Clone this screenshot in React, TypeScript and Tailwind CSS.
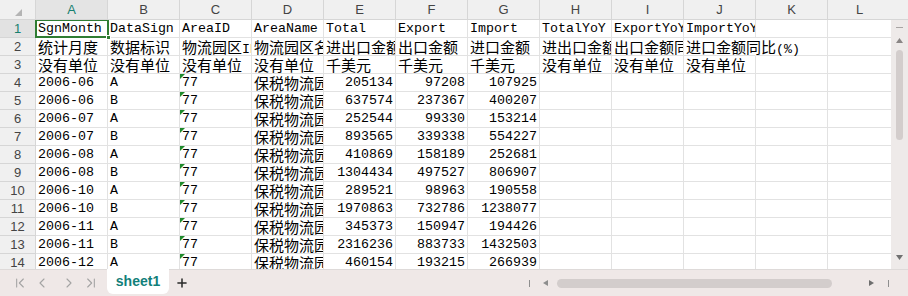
import { ChevronFirst, ChevronLast, ChevronLeft, ChevronRight, Plus } from "lucide-react"

const COLS = ["A", "B", "C", "D", "E", "F", "G", "H", "I", "J", "K"]

const HEAD = [
  ["SgnMonth", "DataSign", "AreaID", "AreaName", "Total", "Export", "Import", "TotalYoY", "ExportYoY", "ImportYoY"],
  ["统计月度", "数据标识", "物流园区ID", "物流园区名称", "进出口金额", "出口金额", "进口金额", "进出口金额同比", "出口金额同比", "进口金额同比(%)"],
  ["没有单位", "没有单位", "没有单位", "没有单位", "千美元", "千美元", "千美元", "没有单位", "没有单位", "没有单位"],
]

const data = [
  ["2006-06", "A", "205134", "97208", "107925"],
  ["2006-06", "B", "637574", "237367", "400207"],
  ["2006-07", "A", "252544", "99330", "153214"],
  ["2006-07", "B", "893565", "339338", "554227"],
  ["2006-08", "A", "410869", "158189", "252681"],
  ["2006-08", "B", "1304434", "497527", "806907"],
  ["2006-10", "A", "289521", "98963", "190558"],
  ["2006-10", "B", "1970863", "732786", "1238077"],
  ["2006-11", "A", "345373", "150947", "194426"],
  ["2006-11", "B", "2316236", "883733", "1432503"],
  ["2006-12", "A", "460154", "193215", "266939"],
]

type Cell = { text?: string; right?: boolean; flag?: boolean; spill?: boolean }

const rows: Cell[][] = [
  ...HEAD.map((r, ri) => [
    ...r.map((t, ci) => ({ text: t, spill: ri === 1 && ci === 9 })),
    {},
  ]),
  ...data.map((d) => [
    { text: d[0] },
    { text: d[1] },
    { text: "77", flag: true },
    { text: "保税物流园区" },
    { text: d[2], right: true },
    { text: d[3], right: true },
    { text: d[4], right: true },
    {},
    {},
    {},
    {},
  ]),
]

function Txt({ s }: { s: string }) {
  const parts = s.split(/([\u4e00-\u9fff]+)/)
  return (
    <>
      {parts.map((p, i) =>
        /[\u4e00-\u9fff]/.test(p) ? (
          <span key={i} className="text-[15px] font-['Noto_Sans_CJK_SC',sans-serif]">
            {p}
          </span>
        ) : (
          <span key={i}>{p}</span>
        )
      )}
    </>
  )
}

export default function App() {
  return (
    <div className="w-[908px] h-[296px] overflow-hidden flex flex-col bg-white select-none">
      {/* column headers */}
      <div className="flex h-[20px] shrink-0 bg-[#f0f0f0] font-['Liberation_Sans',sans-serif] text-[13px] text-[#444]">
        <div className="relative w-[36px] border-r border-b border-[#d6d6d6]">
          <svg className="absolute left-[15px] top-[9px]" width="7" height="7" viewBox="0 0 7 7">
            <path d="M7 0 L7 7 L0 7 Z" fill="#b4b4b4" />
          </svg>
        </div>
        {COLS.map((c) => (
          <div
            key={c}
            className={`w-[72px] border-r border-b border-[#d6d6d6] text-center leading-[20px] ${
              c === "A" ? "bg-[#e4e4e4] text-[#17806f]" : ""
            }`}
          >
            {c}
          </div>
        ))}
        <div className="flex-1 border-b border-[#d6d6d6] text-center leading-[20px] pr-[17px]">L</div>
      </div>

      {/* grid body */}
      <div className="flex flex-1 min-h-0">
        <div className="relative w-[891px] overflow-hidden">
          {rows.map((r, ri) => (
            <div key={ri} className="flex h-[18px]">
              <div
                className={`w-[36px] shrink-0 border-r border-b border-[#d6d6d6] text-center leading-[17px] text-[13px] text-[#444] font-['Liberation_Sans',sans-serif] ${
                  ri === 0 ? "bg-[#e2e2e2] text-[#17806f]" : "bg-[#f0f0f0]"
                }`}
              >
                {ri + 1}
              </div>
              {r.map((cell, ci) => (
                <div
                  key={ci}
                  className={`relative w-[72px] shrink-0 border-b border-r border-[#e2e2e2] whitespace-nowrap px-[2px] leading-[17px] text-[13.3px] text-black font-['Liberation_Mono','Noto_Sans_CJK_SC',monospace] ${
                    cell.right ? "text-right" : ""
                  } ${cell.spill ? "overflow-visible z-10 border-r-white" : "overflow-hidden"}`}
                >
                  {cell.flag && (
                    <svg className="absolute left-0 top-0" width="5" height="5" viewBox="0 0 5 5">
                      <path d="M0 0 L5 0 L0 5 Z" fill="#1f8a2c" />
                    </svg>
                  )}
                  {cell.text && <Txt s={cell.text} />}
                </div>
              ))}
              <div className="flex-1 border-b border-[#e2e2e2]" />
            </div>
          ))}

          {/* selection A1 */}
          <div className="absolute left-[35px] top-[-1px] w-[74px] h-[19px] border-2 border-[#2f7d32] pointer-events-none" />
          <div className="absolute left-[106px] top-[15px] w-[5px] h-[5px] bg-[#2f7d32] border border-white" />
        </div>

        {/* vertical scrollbar */}
        <div className="w-[17px] bg-[#eeeae9] flex flex-col items-center">
          <div className="mt-[7px] w-[7px] h-px bg-[#a8a4a3]" />
          <svg className="mt-[10px]" width="7" height="5" viewBox="0 0 7 5">
            <path d="M3.5 0 L7 5 L0 5 Z" fill="#8a8685" />
          </svg>
          <div className="mt-[7px] w-[7px] h-[90px] rounded-full bg-[#d3cdcc]" />
          <div className="flex-1" />
          <svg className="mb-[9px]" width="7" height="5" viewBox="0 0 7 5">
            <path d="M0 0 L7 0 L3.5 5 Z" fill="#707070" />
          </svg>
        </div>
      </div>

      {/* sheet tabs */}
      <div className="h-[27px] shrink-0 bg-[#efe8e7] border-t border-[#dedad9] flex items-start">
        <div className="flex items-center h-[26px] pl-[12px] gap-[6px] text-[#a3a3a3]">
          <ChevronFirst size={16} strokeWidth={1.6} />
          <ChevronLeft size={16} strokeWidth={1.6} />
          <ChevronRight size={16} strokeWidth={1.6} className="ml-[5px]" />
          <ChevronLast size={16} strokeWidth={1.6} />
        </div>
        <div className="ml-[8px] w-[62px] h-[25px] -mt-px bg-white rounded-b-[6px] flex items-center justify-center text-[14px] font-bold text-[#127f7a] font-['Liberation_Sans',sans-serif]">
          sheet1
        </div>
        <div className="ml-[6px] h-[26px] flex items-center text-[#2a2a2a]">
          <Plus size={14} strokeWidth={2.6} />
        </div>

        <div className="ml-auto h-[26px] flex items-center">
          <div className="w-px h-[7px] bg-[#8e8e8e]" />
          <svg className="ml-[13px]" width="5" height="6" viewBox="0 0 5 6">
            <path d="M5 0 L5 6 L0 3 Z" fill="#8e8e8e" />
          </svg>
          <div className="ml-[9px] w-[275px] h-[9px] rounded-full bg-[#d3cdcc]" />
          <svg className="ml-[37px]" width="5" height="6" viewBox="0 0 5 6">
            <path d="M0 0 L5 3 L0 6 Z" fill="#6e6e6e" />
          </svg>
          <div className="ml-[14px] mr-[19px] w-px h-[7px] bg-[#8e8e8e]" />
        </div>
      </div>
    </div>
  )
}
